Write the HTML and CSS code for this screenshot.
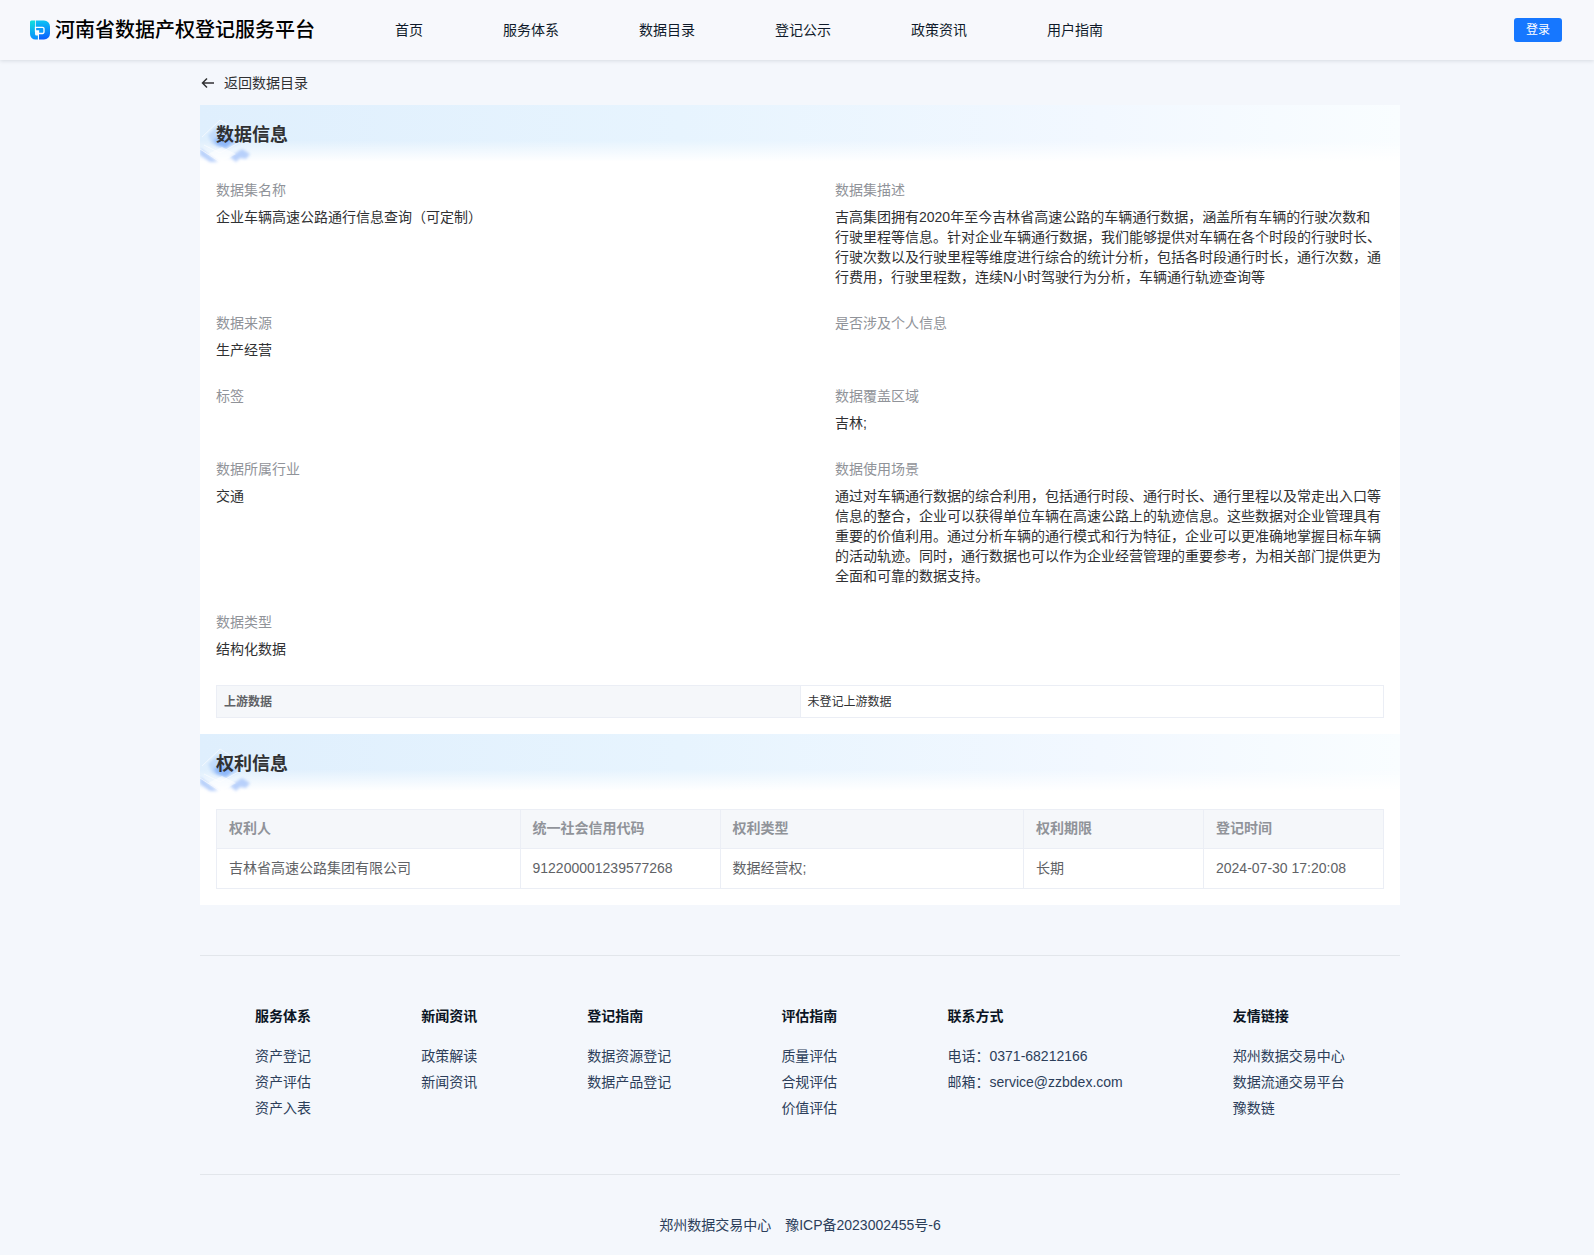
FILE: index.html
```html
<!DOCTYPE html>
<html lang="zh-CN">
<head>
    <meta charset="UTF-8">
    <meta name="viewport" content="width=device-width, initial-scale=1.0">
    <title>河南省数据产权登记服务平台</title>
    <link rel="stylesheet" href="styles.css">
</head>
<body>
    <header class="header">
        <a class="logo" href="#">
            <svg class="logo-icon" viewBox="0 0 20 20" aria-hidden="true">
                <defs>
                    <linearGradient id="logoLeft" x1="0" y1="0" x2="0" y2="1">
                        <stop offset="0" stop-color="#12e0dc"/>
                        <stop offset="1" stop-color="#0a8cff"/>
                    </linearGradient>
                    <linearGradient id="logoRight" x1="0" y1="0" x2="0" y2="1">
                        <stop offset="0" stop-color="#0cc4f4"/>
                        <stop offset="1" stop-color="#0a5cff"/>
                    </linearGradient>
                </defs>
                <path fill="url(#logoLeft)" d="M1.500 0.500H5V14a1.500 1.500 0 0 0 1.500 1.500H8v4H5.500A5.500 5.500 0 0 1 0 14V2a1.500 1.500 0 0 1 1.500-1.500z"/>
                <path fill="url(#logoRight)" d="M5.800 0.500H14a6 6 0 0 1 6 6V13.500a6 6 0 0 1-6 6H8.800V9H5.800z"/>
                <path fill="#0d9bf8" stroke="#fff" stroke-width="1.300" d="M5.500 7.300H12.500a1.500 1.500 0 0 1 1.500 1.500V12a1.500 1.500 0 0 1-1.500 1.500H8.500V11H5.500z"/>
                <path fill="none" stroke="#fff" d="M8.400 13V20"/>
            </svg>
            <span class="logo-name">河南省数据产权登记服务平台</span>
        </a>
        <nav class="nav">
            <a href="#">首页</a>
            <a href="#">服务体系</a>
            <a href="#">数据目录</a>
            <a href="#">登记公示</a>
            <a href="#">政策资讯</a>
            <a href="#">用户指南</a>
        </nav>
        <button class="login-btn" type="button">登录</button>
    </header>

    <div class="page">
        <a class="back" href="#">
            <svg class="back-icon" viewBox="0 0 16 16" aria-hidden="true">
                <path d="M14 8H2.500M7 3.500L2.500 8L7 12.500"/>
            </svg>
            返回数据目录
        </a>

        <main class="card">
            <!-- 数据信息 -->
            <section>
                <div class="banner">
                    <svg class="banner-art" viewBox="0 0 52 60" aria-hidden="true"><use href="#cubes"/></svg>
                    <h2 class="banner-title">数据信息</h2>
                </div>
                <div class="section-body">
                    <dl class="info">
                        <div class="info-item">
                            <dt>数据集名称</dt>
                            <dd>企业车辆高速公路通行信息查询（可定制）</dd>
                        </div>
                        <div class="info-item">
                            <dt>数据集描述</dt>
                            <dd>吉高集团拥有2020年至今吉林省高速公路的车辆通行数据，涵盖所有车辆的行驶次数和行驶里程等信息。针对企业车辆通行数据，我们能够提供对车辆在各个时段的行驶时长、行驶次数以及行驶里程等维度进行综合的统计分析，包括各时段通行时长，通行次数，通行费用，行驶里程数，连续N小时驾驶行为分析，车辆通行轨迹查询等</dd>
                        </div>
                        <div class="info-item">
                            <dt>数据来源</dt>
                            <dd>生产经营</dd>
                        </div>
                        <div class="info-item">
                            <dt>是否涉及个人信息</dt>
                            <dd></dd>
                        </div>
                        <div class="info-item">
                            <dt>标签</dt>
                            <dd></dd>
                        </div>
                        <div class="info-item">
                            <dt>数据覆盖区域</dt>
                            <dd>吉林;</dd>
                        </div>
                        <div class="info-item">
                            <dt>数据所属行业</dt>
                            <dd>交通</dd>
                        </div>
                        <div class="info-item">
                            <dt>数据使用场景</dt>
                            <dd>通过对车辆通行数据的综合利用，包括通行时段、通行时长、通行里程以及常走出入口等信息的整合，企业可以获得单位车辆在高速公路上的轨迹信息。这些数据对企业管理具有重要的价值利用。通过分析车辆的通行模式和行为特征，企业可以更准确地掌握目标车辆的活动轨迹。同时，通行数据也可以作为企业经营管理的重要参考，为相关部门提供更为全面和可靠的数据支持。</dd>
                        </div>
                        <div class="info-item">
                            <dt>数据类型</dt>
                            <dd>结构化数据</dd>
                        </div>
                    </dl>
                    <table class="upstream">
                        <tr>
                            <th scope="row">上游数据</th>
                            <td>未登记上游数据</td>
                        </tr>
                    </table>
                </div>
            </section>

            <!-- 权利信息 -->
            <section>
                <div class="banner">
                    <svg class="banner-art" viewBox="0 0 52 60" aria-hidden="true"><use href="#cubes"/></svg>
                    <h2 class="banner-title">权利信息</h2>
                </div>
                <div class="section-body">
                    <table class="rights">
                        <colgroup>
                            <col>
                            <col class="col-code">
                            <col>
                            <col class="col-short">
                            <col class="col-short">
                        </colgroup>
                        <thead>
                            <tr>
                                <th>权利人</th>
                                <th>统一社会信用代码</th>
                                <th>权利类型</th>
                                <th>权利期限</th>
                                <th>登记时间</th>
                            </tr>
                        </thead>
                        <tbody>
                            <tr>
                                <td>吉林省高速公路集团有限公司</td>
                                <td>912200001239577268</td>
                                <td>数据经营权;</td>
                                <td>长期</td>
                                <td>2024-07-30 17:20:08</td>
                            </tr>
                        </tbody>
                    </table>
                </div>
            </section>
        </main>

        <footer class="footer">
            <div class="footer-links">
                <div class="footer-col">
                    <h3>服务体系</h3>
                    <a href="#">资产登记</a>
                    <a href="#">资产评估</a>
                    <a href="#">资产入表</a>
                </div>
                <div class="footer-col">
                    <h3>新闻资讯</h3>
                    <a href="#">政策解读</a>
                    <a href="#">新闻资讯</a>
                </div>
                <div class="footer-col">
                    <h3>登记指南</h3>
                    <a href="#">数据资源登记</a>
                    <a href="#">数据产品登记</a>
                </div>
                <div class="footer-col">
                    <h3>评估指南</h3>
                    <a href="#">质量评估</a>
                    <a href="#">合规评估</a>
                    <a href="#">价值评估</a>
                </div>
                <div class="footer-col">
                    <h3>联系方式</h3>
                    <span>电话：0371-68212166</span>
                    <span>邮箱：service@zzbdex.com</span>
                </div>
                <div class="footer-col">
                    <h3>友情链接</h3>
                    <a href="#">郑州数据交易中心</a>
                    <a href="#">数据流通交易平台</a>
                    <a href="#">豫数链</a>
                </div>
            </div>
            <div class="copyright">
                <span>郑州数据交易中心</span>
                <a href="#">豫ICP备2023002455号-6</a>
            </div>
        </footer>
    </div>

    <!-- 标题栏装饰图形 -->
    <svg class="sprite" aria-hidden="true">
        <defs>
            <filter id="soft"><feGaussianBlur stdDeviation="1.500"/></filter>
            <symbol id="cubes" viewBox="0 0 52 60">
                <g filter="url(#soft)">
                    <path fill="#a4c8fa" opacity=".5" d="M8 30l10-9 16 8 6 8-14 7-14-5z"/>
                    <path fill="#6ea2f8" opacity=".6" d="M14 34l10-3 10 5-8 7-10-3z"/>
                    <path fill="#8fb4f8" opacity=".6" d="M0 43l18 14h-8L0 50z"/>
                    <path fill="#8fb4f8" opacity=".6" d="M30 52l12-8 8 5-4 5-6-1-4 4z"/>
                </g>
                <path fill="#fff" opacity=".5" d="M22 42l14 7-14 8-14-8z"/>
                <path fill="none" stroke="#fff" opacity=".6" d="M2 32l18-17 22 14M4 40l16 8 22-12M0 44l20 13"/>
            </symbol>
        </defs>
    </svg>
</body>
</html>
```

FILE: styles.css
```css
:root {
    --primary: #1677ff;
    --bg: #f4f7fc;
    --header-bg: #f7f8fc;
    --card-bg: #ffffff;
    --text: #303133;
    --text-regular: #606266;
    --text-muted: #909399;
    --border: #ebeef5;
    --footer-text: #2c3e5a;
}

* {
    box-sizing: border-box;
}

body {
    font-family: "Liberation Sans", "Noto Sans CJK SC", sans-serif;
    font-size: 14px;
    line-height: 20px;
    margin: 0;
    background: var(--bg);
    color: var(--text);
}

a {
    color: inherit;
    text-decoration: none;
}

.header {
    display: flex;
    align-items: center;
    height: 60px;
    padding: 0 32px 0 30px;
    background: var(--header-bg);
    box-shadow: 0 1px 4px rgba(0, 21, 41, 0.12);
}

.logo {
    display: flex;
    align-items: center;
    gap: 5px;
    color: #000;
}

.logo-icon {
    width: 20px;
    height: 20px;
}

.logo-name {
    font-size: 20px;
    font-weight: 500;
    line-height: 28px;
}

.nav {
    display: flex;
    gap: 80px;
    margin-left: 80px;
    color: #0f1a2a;
}

.login-btn {
    margin-left: auto;
    width: 48px;
    height: 24px;
    padding: 0;
    border: none;
    border-radius: 3px;
    background: var(--primary);
    color: #fff;
    font-family: inherit;
    font-size: 12px;
    line-height: 22px;
    cursor: pointer;
}

.page {
    padding-left: 6px;
}

.back {
    display: flex;
    align-items: center;
    gap: 8px;
    max-width: 1200px;
    height: 45px;
    margin: 0 auto;
}

.back-icon {
    width: 16px;
    height: 16px;
    fill: none;
    stroke: currentColor;
    stroke-width: 1.5;
}

.card {
    max-width: 1200px;
    margin: 0 auto;
    background: var(--card-bg);
}

.banner {
    position: relative;
    height: 59px;
    padding: 16px;
    background:
        linear-gradient(to bottom, rgba(255, 255, 255, 0) 60%, #fff 96%),
        linear-gradient(to right, #dfeffd, #e7f4fe 40%, #f2f8ff 75%, #f9fdff);
}

.banner-art {
    position: absolute;
    left: 0;
    top: 0;
    width: 52px;
    height: 60px;
}

.banner-title {
    position: relative;
    margin: 0;
    font-size: 18px;
    font-weight: 700;
    line-height: 28px;
}

.section-body {
    padding: 16px;
}

.info {
    display: grid;
    grid-template-columns: 1fr 1fr;
    column-gap: 70px;
    row-gap: 26px;
    margin: 0 0 26px;
}

.info dt {
    color: var(--text-muted);
    margin-bottom: 7px;
}

.info dd {
    margin: 0;
    min-height: 20px;
}

table {
    width: 100%;
    border-collapse: collapse;
    table-layout: fixed;
}

th,
td {
    border: 1px solid var(--border);
    text-align: left;
}

th {
    background: #f5f7fa;
}

.upstream th,
.upstream td {
    padding: 6px 7px 5px;
    font-size: 12px;
}

.upstream th {
    color: var(--text-regular);
}

.rights th,
.rights td {
    padding: 9px 12px 10px;
    color: var(--text-regular);
}

.rights th {
    padding: 8px 12px 10px;
    color: var(--text-muted);
}

.col-code {
    width: 200px;
}

.col-short {
    width: 180px;
}

.footer {
    max-width: 1200px;
    margin: 50px auto 0;
    border-top: 1px solid #e2e6eb;
    color: var(--footer-text);
}

.footer-links {
    display: flex;
    justify-content: space-around;
    padding: 50px 0 56px;
    border-bottom: 1px solid #e2e6eb;
}

.footer-col {
    display: flex;
    flex-direction: column;
    gap: 6px;
}

.footer-col h3 {
    margin: 0 0 14px;
    font-size: 14px;
    font-weight: 700;
    color: #0b1524;
}

.copyright {
    display: flex;
    justify-content: center;
    gap: 14px;
    padding: 40px 0 20px;
}

.sprite {
    position: absolute;
    width: 0;
    height: 0;
}
```
